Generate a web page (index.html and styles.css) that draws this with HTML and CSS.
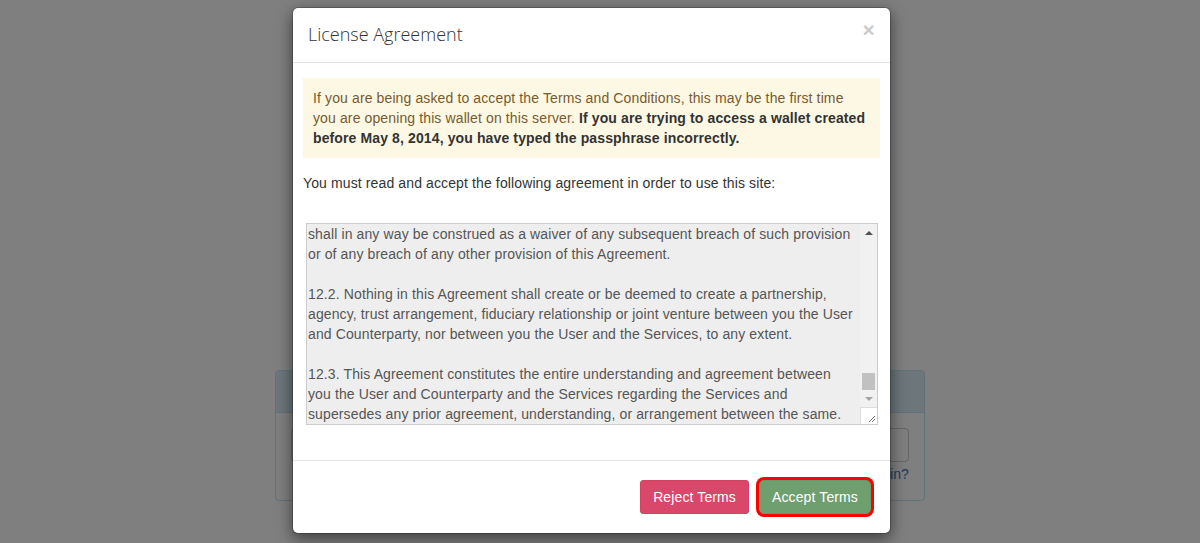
FILE: index.html
```html
<!DOCTYPE html>
<html>
<head>
<meta charset="utf-8">
<title>License Agreement</title>
<link rel="stylesheet" href="styles.css">
</head>
<body>
<div class="page">
  <div class="panel">
    <div class="panel-heading"></div>
    <div class="panel-body">
      <div class="input"></div>
      <div class="help"><a href="#">Forgot your login?</a></div>
    </div>
  </div>
</div>
<div class="backdrop"></div>
<div class="modal">
  <div class="modal-header">
    <h4 class="modal-title">License Agreement</h4>
    <span class="close">×</span>
  </div>
  <div class="modal-body">
    <div class="alert"><span>If you are being asked to accept the Terms and Conditions, this may be the first time you are opening this wallet on this server. </span><strong>If you are trying to access a wallet created before May 8, 2014, you have typed the passphrase incorrectly.</strong></div>
    <p class="lead-text">You must read and accept the following agreement in order to use this site:</p>
    <div class="terms">
      <div class="terms-text">shall in any way be construed as a waiver of any subsequent breach of such provision
or of any breach of any other provision of this Agreement.

12.2. Nothing in this Agreement shall create or be deemed to create a partnership,
agency, trust arrangement, fiduciary relationship or joint venture between you the User
and Counterparty, nor between you the User and the Services, to any extent.

12.3. This Agreement constitutes the entire understanding and agreement between
you the User and Counterparty and the Services regarding the Services and
supersedes any prior agreement, understanding, or arrangement between the same.</div>
      <div class="scrollbar">
        <div class="arrow up"></div>
        <div class="track"><div class="thumb"></div></div>
        <div class="arrow down"></div>
        <div class="resizer">
          <svg width="17" height="17" viewBox="0 0 17 17"><path d="M15 9 L9 15 M15 12 L12 15" stroke="#777" stroke-width="1"/></svg>
        </div>
      </div>
    </div>
  </div>
  <div class="modal-footer">
    <button class="btn btn-reject">Reject Terms</button>
    <button class="btn btn-accept">Accept Terms</button>
  </div>
</div>
</body>
</html>
```

FILE: styles.css
```css
* { box-sizing: border-box; }
html, body { margin: 0; padding: 0; }
body {
  width: 1200px;
  height: 543px;
  overflow: hidden;
  background: #fff;
  font-family: "Liberation Sans", Arial, sans-serif;
  font-size: 14px;
  line-height: 20px;
  letter-spacing: 0.12px;
  color: #333;
  position: relative;
}
.page { padding-top: 370px; }
.panel {
  width: 650px;
  margin: 0 auto;
  border: 1px solid #bce8f1;
  border-radius: 4px;
  background: #fff;
}
.panel-heading {
  height: 42px;
  padding: 10px 15px;
  background: #d9edf7;
  border-bottom: 1px solid #bce8f1;
  border-radius: 3px 3px 0 0;
}
.panel-body { padding: 15px 15px 16px; }
.input {
  height: 34px;
  border: 1px solid #ccc;
  border-radius: 4px;
}
.help { text-align: right; margin-top: 2px; }
.help a { color: #337ab7; text-decoration: none; }

.backdrop {
  position: absolute;
  inset: 0;
  background: rgba(0,0,0,0.5);
}
.modal {
  position: absolute;
  left: 292px;
  top: 7px;
  width: 599px;
  background: #fff;
  border: 1px solid rgba(0,0,0,0.2);
  border-radius: 6px;
  box-shadow: 0 5px 15px rgba(0,0,0,0.5);
  background-clip: padding-box;
}
.modal-header {
  display: flex;
  justify-content: space-between;
  align-items: flex-start;
  padding: 13px 15px 15px;
  border-bottom: 1px solid #e5e5e5;
}
.modal-title {
  margin: 0;
  font-family: "Open Sans", sans-serif;
  font-weight: 300;
  font-size: 18px;
  line-height: 26px;
  letter-spacing: 0;
  color: #333;
}
.close {
  font-family: "Liberation Sans", Arial, sans-serif;
  font-size: 21px;
  font-weight: bold;
  line-height: 1;
  color: #000;
  opacity: 0.2;
  margin-top: -2px;
  margin-right: 0;
}
.modal-body { padding: 15px 10px 35px; }
.alert {
  background: #fcf8e3;
  color: #7a5a30;
  padding: 10px;
  border-radius: 0;
  margin-bottom: 15px;
}
.alert strong { color: #333; }
.lead-text { margin: 0 0 30px; }
.terms {
  display: flex;
  margin-left: 3px;
  width: 572px;
  height: 202px;
  border: 1px solid #ccc;
  background: #eee;
}
.terms-text {
  flex: 1;
  padding: 0 0 0 1px;
  white-space: pre;
  color: #555;
  overflow: hidden;
}
.scrollbar {
  width: 17px;
  display: flex;
  flex-direction: column;
  background: #f1f1f1;
}
.arrow { height: 17px; display: flex; align-items: center; justify-content: center; }
.arrow::before {
  content: "";
  border-left: 4px solid transparent;
  border-right: 4px solid transparent;
}
.arrow.up::before { border-bottom: 4px solid #505050; }
.arrow.down::before { border-top: 4px solid #a3a3a3; }
.track { flex: 1; position: relative; }
.thumb {
  position: absolute;
  left: 2px;
  right: 2px;
  top: 132px;
  height: 17px;
  background: #c1c1c1;
}
.resizer {
  height: 17px;
  background: #fff;
  border-left: 1px solid #ddd;
  border-top: 1px solid #ddd;
  display: flex;
}
.resizer svg { margin: -1px 0 0 -1px; }
.modal-footer {
  display: flex;
  justify-content: flex-end;
  gap: 10px;
  padding: 19px 19px 19px;
  border-top: 1px solid #e5e5e5;
}
.btn {
  font-family: "Liberation Sans", Arial, sans-serif;
  font-size: 14px;
  line-height: 20px;
  letter-spacing: 0.12px;
  padding: 6px 12px;
  color: #fff;
  border: 1px solid transparent;
  border-radius: 3px;
  white-space: nowrap;
  cursor: pointer;
}
.btn-reject {
  background: #d9486a;
  border-color: #d2435f;
}
.btn-accept {
  background: #6f9e6f;
  border-color: #6a986a;
  border-radius: 5px;
  box-shadow: 0 0 0 3px #f00;
}
```
